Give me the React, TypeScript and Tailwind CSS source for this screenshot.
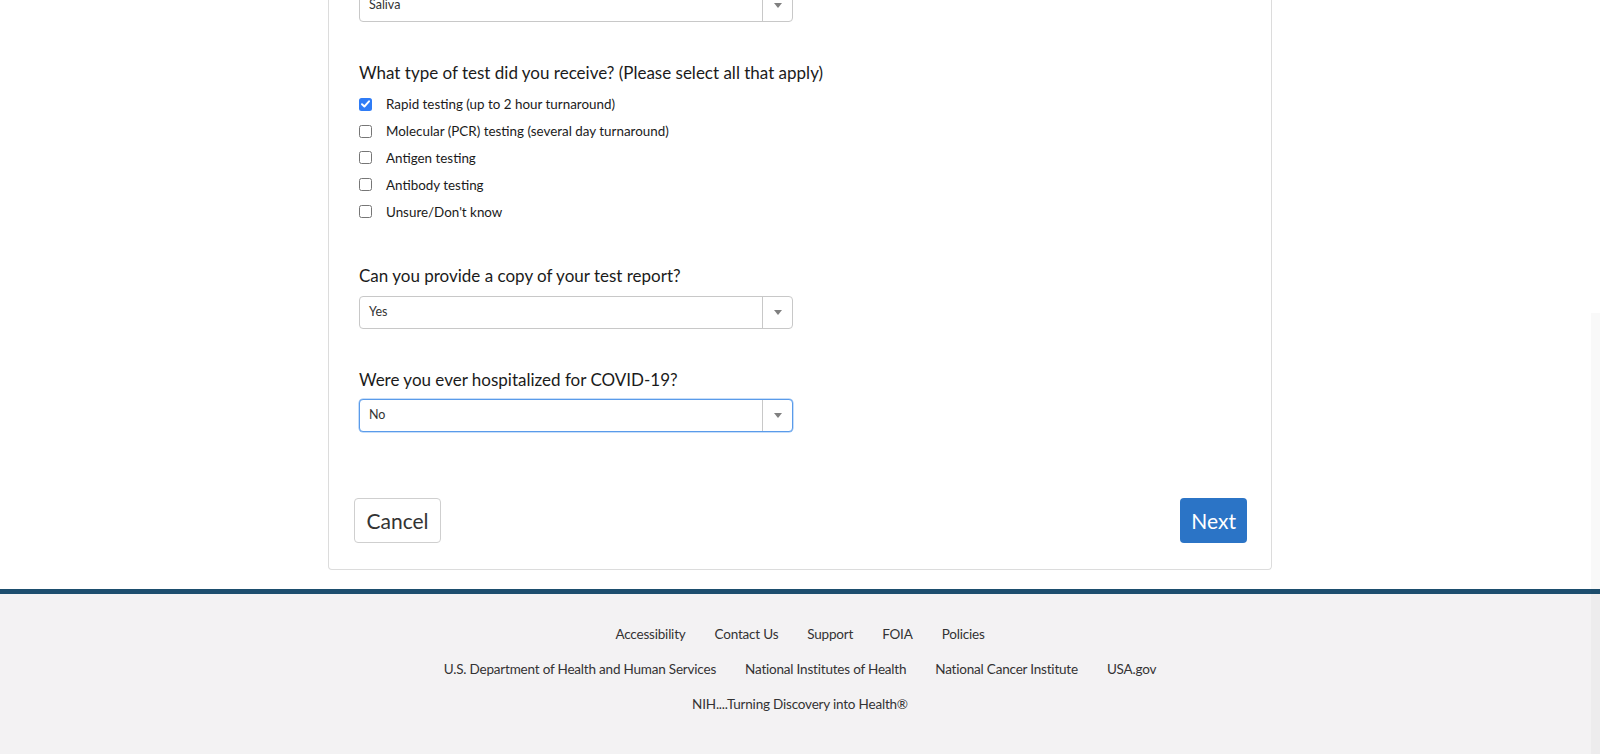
import React from "react";

function Select({ value, focused = false, className = "" }: { value: string; focused?: boolean; className?: string }) {
  return (
    <div
      className={
        "flex h-[33px] w-[434px] items-stretch rounded-[4px] border bg-white " +
        (focused ? "border-[#5a9bea] shadow-[0_0_0_0.5px_#8fbdf3]" : "border-[#c8c8c8]") +
        " " +
        className
      }
    >
      <div className="flex flex-1 items-center pl-[9px] text-[12.5px] text-[#333]">{value}</div>
      <div className="flex w-[30px] items-center justify-center border-l border-[#c8c8c8]">
        <svg width="8" height="5" viewBox="0 0 8 5">
          <path d="M0 0 H8 L4 5 Z" fill="#808080" />
        </svg>
      </div>
    </div>
  );
}

function Check({ checked = false, label }: { checked?: boolean; label: string }) {
  return (
    <div className="flex h-[26.8px] items-center">
      {checked ? (
        <span className="flex h-[13px] w-[13px] items-center justify-center rounded-[2.5px] bg-[#2f7cf6]">
          <svg width="9" height="8" viewBox="0 0 9 8">
            <path d="M1 4.2 L3.4 6.5 L8 1.3" stroke="white" strokeWidth="1.9" fill="none" strokeLinecap="round" strokeLinejoin="round" />
          </svg>
        </span>
      ) : (
        <span className="h-[13px] w-[13px] rounded-[2.5px] border border-[#767676] bg-white" />
      )}
      <span className="ml-[14px] text-[13.4px] text-[#1b1b1b]">{label}</span>
    </div>
  );
}

export default function App() {
  return (
    <div className="relative min-h-screen overflow-hidden bg-white font-['Lato',sans-serif] text-[#1b1b1b]">
      <div className="pointer-events-none absolute bottom-0 right-0 top-[313px] w-[9px] bg-black/[0.025]" />
      <main className="mx-auto w-[944px] rounded-b-[4px] border-x border-b border-[#dcdcdc] bg-white pb-[26px] pl-[30px] pr-[24px]">
        <Select value="Saliva" className="-mt-[11px]" />

        <h2 className="mt-[37px] text-[17px] leading-[27px]">What type of test did you receive? (Please select all that apply)</h2>
        <div className="mt-[5px] flex flex-col">
          <Check checked label="Rapid testing (up to 2 hour turnaround)" />
          <Check label="Molecular (PCR) testing (several day turnaround)" />
          <Check label="Antigen testing" />
          <Check label="Antibody testing" />
          <Check label="Unsure/Don't know" />
        </div>

        <h2 className="mt-[37px] text-[17px] leading-[27px]">Can you provide a copy of your test report?</h2>
        <Select value="Yes" className="mt-[7px]" />

        <h2 className="mt-[37px] text-[17px] leading-[27px]">Were you ever hospitalized for COVID-19?</h2>
        <Select value="No" focused className="mt-[6px]" />

        <div className="-ml-[5px] mt-[66px] flex items-center justify-between">
          <button className="h-[45px] rounded-[4px] border border-[#cfcfcf] bg-white px-[11.5px] text-[21px] text-[#333]">Cancel</button>
          <button className="h-[45px] rounded-[4px] bg-[#2b74c6] px-[11px] text-[21px] text-white">Next</button>
        </div>
      </main>

      <footer className="mt-[19px] border-t-[5px] border-[#1d4e6e] bg-[#f3f2f3] pb-[52px] pt-[23px] text-[13.5px] tracking-[-0.2px] text-[#333]">
        <div className="flex h-[35px] items-center justify-center gap-[29px]">
          <a>Accessibility</a>
          <a>Contact Us</a>
          <a>Support</a>
          <a>FOIA</a>
          <a>Policies</a>
        </div>
        <div className="flex h-[35px] items-center justify-center gap-[29px]">
          <a>U.S. Department of Health and Human Services</a>
          <a>National Institutes of Health</a>
          <a>National Cancer Institute</a>
          <a>USA.gov</a>
        </div>
        <div className="flex h-[35px] items-center justify-center">
          <span>NIH....Turning Discovery into Health®</span>
        </div>
      </footer>
    </div>
  );
}
